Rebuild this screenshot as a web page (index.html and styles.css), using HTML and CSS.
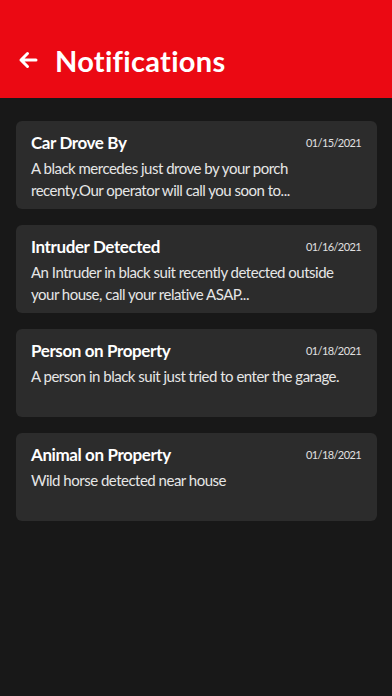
FILE: index.html
```html
<!DOCTYPE html>
<html lang="en">
<head>
<meta charset="utf-8">
<title>Notifications</title>
<link rel="stylesheet" href="styles.css">
</head>
<body>
<header class="appbar">
  <svg class="back" width="20" height="18" viewBox="0 0 20 18" aria-hidden="true">
    <path d="M18 9H3M9.5 2.5L3 9l6.5 6.5" fill="none" stroke="#fff" stroke-width="3" stroke-linecap="round" stroke-linejoin="round"/>
  </svg>
  <h1 class="title">Notifications</h1>
</header>
<main class="list">
  <article class="card">
    <div class="card-head"><h2 class="card-title">Car Drove By</h2><span class="date">01/15/2021</span></div>
    <p class="card-body">A black mercedes just drove by your porch recenty.Our operator will call you soon to...</p>
  </article>
  <article class="card">
    <div class="card-head"><h2 class="card-title">Intruder Detected</h2><span class="date">01/16/2021</span></div>
    <p class="card-body">An Intruder in black suit recently detected outside your house, call your relative ASAP...</p>
  </article>
  <article class="card">
    <div class="card-head"><h2 class="card-title">Person on Property</h2><span class="date">01/18/2021</span></div>
    <p class="card-body">A person in black suit just tried to enter the garage.</p>
  </article>
  <article class="card">
    <div class="card-head"><h2 class="card-title">Animal on Property</h2><span class="date">01/18/2021</span></div>
    <p class="card-body">Wild horse detected near house</p>
  </article>
</main>
</body>
</html>
```
FILE: styles.css
```css
html, body {
  margin: 0;
  padding: 0;
}
body {
  background: #181818;
  height: 696px;
  font-family: Lato, "Open Sans", sans-serif;
  color: #fff;
}
.appbar {
  background: #EB0913;
  height: 98px;
  box-sizing: border-box;
  display: flex;
  align-items: center;
  padding: 22px 0 0 18px;
  gap: 17px;
}
.back { display: block; }
.title {
  margin: 0;
  font-size: 29px;
  font-weight: 700;
  letter-spacing: 0.3px;
}
.list {
  display: flex;
  flex-direction: column;
  gap: 16px;
  padding: 23px 15px 0 16px;
}
.card {
  background: #2c2c2c;
  border-radius: 6px;
  height: 88px;
  box-sizing: border-box;
  padding: 10px 16px 0 15px;
}
.card-head {
  display: flex;
  justify-content: space-between;
  align-items: center;
  height: 22px;
}
.card-title {
  margin: 0;
  font-size: 17px;
  font-weight: 700;
  letter-spacing: -0.4px;
}
.date {
  font-size: 11px;
  letter-spacing: -0.6px;
  color: #e0e0e0;
}
.card-body {
  margin: 4px 0 0;
  font-size: 15px;
  line-height: 22px;
  letter-spacing: -0.5px;
  color: #e6e6e6;
}
```
